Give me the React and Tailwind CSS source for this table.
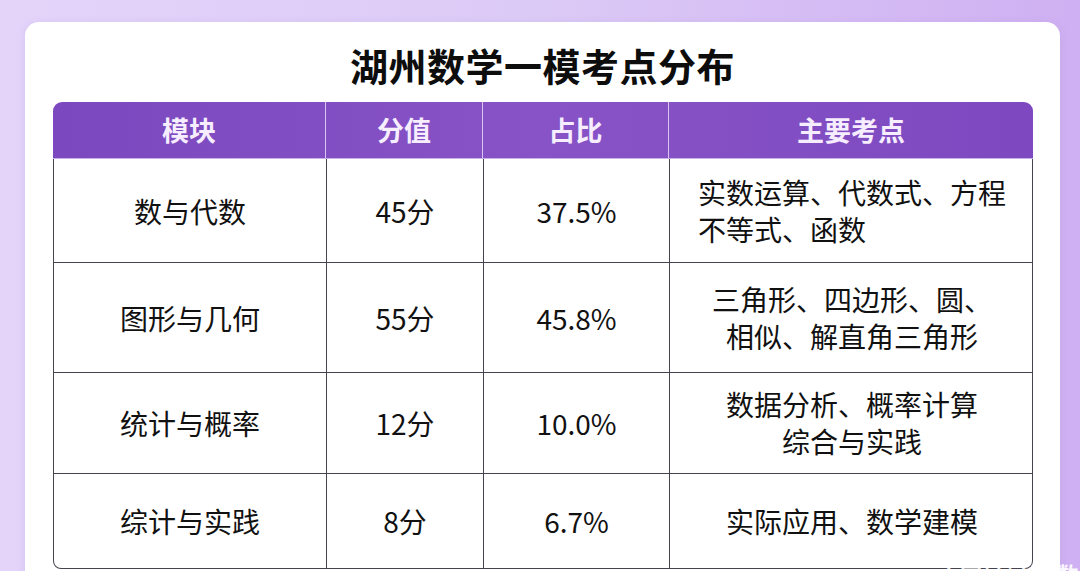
import React from "react";

const rows = [
  { name: "数与代数", score: "45分", pct: "37.5%", points: ["实数运算、代数式、方程", "不等式、函数"], left: true, h: "h-[103px]" },
  { name: "图形与几何", score: "55分", pct: "45.8%", points: ["三角形、四边形、圆、", "相似、解直角三角形"], h: "h-[110px]" },
  { name: "统计与概率", score: "12分", pct: "10.0%", points: ["数据分析、概率计算", "综合与实践"], h: "h-[101px]" },
  { name: "综计与实践", score: "8分", pct: "6.7%", points: ["实际应用、数学建模"], h: "h-[95px]" },
];

const cols = "grid grid-cols-[272px_157px_186px_365px]";

export default function App() {
  return (
    <div
      className="relative w-[1080px] h-[571px] overflow-hidden bg-gradient-to-r from-[#e4d4fa] via-[#dccaf6] to-[#cfb0f2] pl-[25px] pt-[22px]"
      style={{ fontFamily: '"Noto Sans CJK SC", "Noto Sans", sans-serif' }}
    >
      <div className="w-[1035px] h-[600px] bg-white rounded-[14px] shadow-[0_2px_10px_rgba(120,80,180,0.12)] pt-[21px] px-[28px]">
        {/* title */}
        <h1 className="text-center text-[38px] leading-[44px] font-bold text-[#0d0d0d] tracking-[0.5px]">
          湖州数学一模考点分布
        </h1>

        <div className="mt-[15px] w-[980px]">
          {/* header */}
          <div className={`${cols} h-[56px] rounded-t-[9px] bg-gradient-to-r from-[#7c48bf] via-[#8753c6] to-[#7e49c0] text-[#f6eeff] text-[27px] font-bold`}>
            {["模块", "分值", "占比", "主要考点"].map((t, i) => (
              <div
                key={t}
                className={`flex items-center justify-center ${i > 0 ? "border-l border-[#d9c4f2]" : ""}`}
              >
                {t}
              </div>
            ))}
          </div>
          <div className="h-[1px] bg-[#c9b3e6]" />

          {/* body */}
          <div className="border-x-[1.5px] border-b-[1.5px] border-[#45434e] rounded-b-[8px] text-[#111] text-[28px]">
            {rows.map((r, ri) => (
              <div key={r.name} className={`${cols} ${r.h} ${ri > 0 ? "border-t-[1.5px] border-[#45434e]" : ""}`}>
                <div className="flex items-center justify-center">{r.name}</div>
                <div className="flex items-center justify-center border-l-[1.5px] border-[#45434e]">{r.score}</div>
                <div className="flex items-center justify-center border-l-[1.5px] border-[#45434e]">{r.pct}</div>
                <div className="flex items-center justify-center border-l-[1.5px] border-[#45434e] leading-[37px]">
                  <div className={r.left ? "text-left" : "text-center"}>
                    {r.points.map((p) => (
                      <div key={p}>{p}</div>
                    ))}
                  </div>
                </div>
              </div>
            ))}
          </div>
        </div>
      </div>

      {/* watermark, cut by the bottom edge as in the shot */}
      <span className="absolute left-[938px] top-[562px] text-[22px] font-bold text-white leading-none whitespace-nowrap opacity-90">
        百家号/小学数
      </span>
    </div>
  );
}
